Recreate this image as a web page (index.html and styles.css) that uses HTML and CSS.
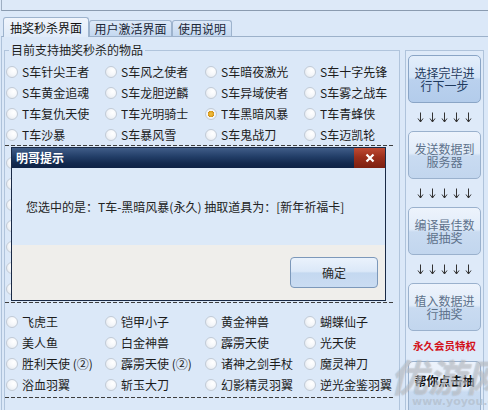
FILE: index.html
```html
<!DOCTYPE html>
<html lang="zh-CN">
<head>
<meta charset="utf-8">
<title>抽奖秒杀界面</title>
<link rel="stylesheet" href="styles.css">
</head>
<body>
<div class="app">
  <div class="topbar"></div>
  <div class="tabs">
    <div class="tab active t1">抽奖秒杀界面</div>
    <div class="tab t2">用户激活界面</div>
    <div class="tab t3">使用说明</div>
  </div>
  <div class="page">
    <fieldset class="group">
      <legend>目前支持抽奖秒杀的物品</legend>
      <div class="grid g1">
        <span class="radio"><i></i>S车针尖王者</span>
        <span class="radio"><i></i>S车风之使者</span>
        <span class="radio"><i></i>S车暗夜激光</span>
        <span class="radio"><i></i>S车十字先锋</span>
        <span class="radio"><i></i>S车黄金追魂</span>
        <span class="radio"><i></i>S车龙胆逆麟</span>
        <span class="radio"><i></i>S车异域使者</span>
        <span class="radio"><i></i>S车雾之战车</span>
        <span class="radio"><i></i>T车复仇天使</span>
        <span class="radio"><i></i>T车光明骑士</span>
        <span class="radio on"><i></i>T车黑暗风暴</span>
        <span class="radio"><i></i>T车青蜂侠</span>
        <span class="radio"><i></i>T车沙暴</span>
        <span class="radio"><i></i>S车暴风雪</span>
        <span class="radio"><i></i>S车鬼战刀</span>
        <span class="radio"><i></i>S车迈凯轮</span>
      </div>
      <div class="sep"></div>
      <div class="grid g2">
        <span class="radio"><i></i></span><span class="radio"><i></i></span><span class="radio"><i></i></span><span class="radio"><i></i></span>
        <span class="radio"><i></i></span><span class="radio"><i></i></span><span class="radio"><i></i></span><span class="radio"><i></i></span>
        <span class="radio"><i></i></span><span class="radio"><i></i></span><span class="radio"><i></i></span><span class="radio"><i></i></span>
        <span class="radio"><i></i></span><span class="radio"><i></i></span><span class="radio"><i></i></span><span class="radio"><i></i></span>
        <span class="radio"><i></i></span><span class="radio"><i></i></span><span class="radio"><i></i></span><span class="radio"><i></i></span>
        <span class="radio"><i></i></span><span class="radio"><i></i></span><span class="radio"><i></i></span><span class="radio"><i></i></span>
        <span class="radio"><i></i></span><span class="radio"><i></i></span><span class="radio"><i></i></span><span class="radio"><i></i></span>
      </div>
      <div class="sep"></div>
      <div class="grid g3">
        <span class="radio"><i></i>飞虎王</span>
        <span class="radio"><i></i>铠甲小子</span>
        <span class="radio"><i></i>黄金神兽</span>
        <span class="radio"><i></i>蝴蝶仙子</span>
        <span class="radio"><i></i>美人鱼</span>
        <span class="radio"><i></i>白金神兽</span>
        <span class="radio"><i></i>霹雳天使</span>
        <span class="radio"><i></i>光天使</span>
        <span class="radio"><i></i>胜利天使 (②)</span>
        <span class="radio"><i></i>霹雳天使 (②)</span>
        <span class="radio"><i></i>诸神之剑手杖</span>
        <span class="radio"><i></i>魔灵神刀</span>
        <span class="radio"><i></i>浴血羽翼</span>
        <span class="radio"><i></i>斩玉大刀</span>
        <span class="radio"><i></i>幻影精灵羽翼</span>
        <span class="radio"><i></i>逆光金鉴羽翼</span>
      </div>
      <div class="sep"></div>
    </fieldset>
    <div class="side">
      <div class="btn b1">选择完毕进<br>行下一步</div>
      <div class="arrows"><svg viewBox="0 0 7 11"><path d="M3.5 0.5V10M1 6.5L3.5 10L6 6.5"/></svg><svg viewBox="0 0 7 11"><path d="M3.5 0.5V10M1 6.5L3.5 10L6 6.5"/></svg><svg viewBox="0 0 7 11"><path d="M3.5 0.5V10M1 6.5L3.5 10L6 6.5"/></svg><svg viewBox="0 0 7 11"><path d="M3.5 0.5V10M1 6.5L3.5 10L6 6.5"/></svg><svg viewBox="0 0 7 11"><path d="M3.5 0.5V10M1 6.5L3.5 10L6 6.5"/></svg></div>
      <div class="btn">发送数据到<br>服务器</div>
      <div class="arrows"><svg viewBox="0 0 7 11"><path d="M3.5 0.5V10M1 6.5L3.5 10L6 6.5"/></svg><svg viewBox="0 0 7 11"><path d="M3.5 0.5V10M1 6.5L3.5 10L6 6.5"/></svg><svg viewBox="0 0 7 11"><path d="M3.5 0.5V10M1 6.5L3.5 10L6 6.5"/></svg><svg viewBox="0 0 7 11"><path d="M3.5 0.5V10M1 6.5L3.5 10L6 6.5"/></svg><svg viewBox="0 0 7 11"><path d="M3.5 0.5V10M1 6.5L3.5 10L6 6.5"/></svg></div>
      <div class="btn">编译最佳数<br>据抽奖</div>
      <div class="arrows"><svg viewBox="0 0 7 11"><path d="M3.5 0.5V10M1 6.5L3.5 10L6 6.5"/></svg><svg viewBox="0 0 7 11"><path d="M3.5 0.5V10M1 6.5L3.5 10L6 6.5"/></svg><svg viewBox="0 0 7 11"><path d="M3.5 0.5V10M1 6.5L3.5 10L6 6.5"/></svg><svg viewBox="0 0 7 11"><path d="M3.5 0.5V10M1 6.5L3.5 10L6 6.5"/></svg><svg viewBox="0 0 7 11"><path d="M3.5 0.5V10M1 6.5L3.5 10L6 6.5"/></svg></div>
      <div class="btn">植入数据进<br>行抽奖</div>
      <div class="vip">永久会员特权</div>
      <div class="btn b5">帮你点击抽</div>
    </div>
  </div>

  <div class="dialog">
    <div class="dlg-title">
      <span class="dlg-caption">明哥提示</span>
      <span class="dlg-close"><svg viewBox="0 0 10 10"><path d="M1.5 1.5L8.5 8.5M8.5 1.5L1.5 8.5"/></svg></span>
    </div>
    <div class="dlg-body">您选中的是：T车-黑暗风暴(永久) 抽取道具为：[新年祈福卡]</div>
    <div class="dlg-foot"><div class="ok">确定</div></div>
  </div>

  <div class="wm">
    <div class="wm-big">优游网</div>
    <div class="wm-url">www.yoyou.com</div>
  </div>
</div>
</body>
</html>
```

FILE: styles.css
```css
* { box-sizing: border-box; }
html, body { margin: 0; padding: 0; }
body {
  width: 488px;
  height: 410px;
  overflow: hidden;
  background: #dbe8f8;
  font-family: "Noto Sans CJK SC", "Noto Sans", sans-serif;
  font-size: 12px;
  color: #1e1e1e;
}
.app { position: relative; width: 488px; height: 410px; overflow: hidden; }

.topbar {
  height: 11px;
  margin-left: 1px;
  border-left: 1px solid #9eaec2;
  border-bottom: 1px solid #8a9bb0;
  background: #dde9f8;
}

.tabs {
  display: flex;
  align-items: flex-end;
  height: 25px;
  padding-left: 3px;
}
.tab {
  height: 16px;
  border: 1px solid #9db3cd;
  border-bottom: none;
  border-radius: 3px 3px 0 0;
  background: linear-gradient(#dde9f8, #c4d8f0);
  text-align: center;
  line-height: 15px;
  color: #1c2838;
  white-space: nowrap;
}
.tab.active {
  position: relative;
  z-index: 1;
  height: 20px;
  margin-bottom: -1px;
  line-height: 19px;
  background: linear-gradient(#f0f5fc, #e0ebf9);
  color: #111;
}
.t1 { width: 86px; }
.t2 { width: 83px; }
.t3 { width: 60px; }

.page {
  display: flex;
  align-items: flex-start;
  height: 374px;
  margin-left: 1px;
  border-left: 1px solid #aec2da;
  border-top: 1px solid #9cb1ca;
}

.group {
  margin: 6px 0 0 2px;
  width: 396px;
  min-width: 0;
  padding: 4px 0 40px 0;
  border: 1px solid #b0c4dc;
}
.group legend {
  margin-left: 4px;
  padding: 0 2px;
  line-height: 14px;
  font-size: 12px;
  color: #1e1e1e;
}

.grid {
  display: grid;
  grid-template-columns: 99px 100px 99px 1fr;
  grid-auto-rows: 21px;
  padding-left: 1px;
}
.g2 { margin-top: 6px; margin-bottom: 3px; }
.g3 { margin-top: 8px; margin-bottom: 2px; }

.radio {
  display: flex;
  align-items: center;
  white-space: nowrap;
  line-height: 21px;
  color: #1c1c1c;
}
.radio i {
  flex: none;
  width: 12px;
  height: 12px;
  margin-right: 4px;
  border-radius: 50%;
  border: 1px solid #c2cbd6;
  background: radial-gradient(circle at 65% 35%, #ffffff 0%, #f5f7fa 45%, #dfe4eb 100%);
}
.radio.on i {
  background:
    radial-gradient(circle at 50% 50%, #f2c14a 0%, #dea21e 36%, #c9891a 42%, #f4f6f9 50%, #e3e7ec 100%);
}

.sep {
  height: 1px;
  margin-right: 6px;
  background: repeating-linear-gradient(90deg, #3e3e3e 0 4px, transparent 4px 6px);
}

.side {
  margin: 13px 0 0 5px;
  width: 79px;
  height: 400px;
  flex: none;
  border: 1px solid #afc3db;
  padding: 4px 2px 0;
  background: #deeaf9;
}
.btn {
  height: 48px;
  border: 1px solid #9ab1cd;
  border-radius: 5px;
  background: linear-gradient(#edf3fc 0%, #e1ecf9 46%, #c9dbf1 52%, #c2d6ee 100%);
  display: flex;
  align-items: center;
  justify-content: center;
  text-align: center;
  line-height: 13px;
  color: #5e728b;
  white-space: nowrap;
}
.btn.b1 {
  border-color: #8aa5c6;
  background: linear-gradient(#e3eefb 0%, #d5e5f8 46%, #bad1ee 52%, #b3cceb 100%);
  color: #1f3a5e;
}
.btn.b5 {
  height: 60px;
  align-items: flex-start;
  padding-top: 12px;
  font-weight: bold;
  font-size: 12px;
  color: #111;
}
.arrows {
  height: 28px;
  display: flex;
  justify-content: center;
  align-items: center;
  gap: 5px;
}
.arrows svg {
  width: 7px;
  height: 11px;
  fill: none;
  stroke: #333;
  stroke-width: 1;
}
.vip {
  height: 30px;
  line-height: 30px;
  text-align: center;
  color: #d3121b;
  font-weight: bold;
  font-size: 10.5px;
}

.dialog {
  position: absolute;
  left: 11px;
  top: 147px;
  width: 375px;
  height: 154px;
  border: 1px solid #1a2a46;
  display: flex;
  flex-direction: column;
  background: #dce9f8;
  z-index: 5;
}
.dlg-title {
  height: 20px;
  flex: none;
  display: flex;
  justify-content: space-between;
  align-items: center;
  background: linear-gradient(#405d88 0%, #24406a 40%, #132a4f 75%, #0e2245 100%);
}
.dlg-caption {
  padding-left: 4px;
  color: #fff;
  font-weight: bold;
  font-size: 12px;
  line-height: 20px;
}
.dlg-close {
  width: 31px;
  height: 20px;
  display: flex;
  align-items: center;
  justify-content: center;
  background: linear-gradient(#bf4a33 0%, #9c2f1b 45%, #7c1f10 100%);
}
.dlg-close svg {
  width: 10px;
  height: 10px;
  stroke: #fff;
  stroke-width: 2.2;
  fill: none;
}
.dlg-body {
  height: 77px;
  flex: none;
  display: flex;
  align-items: center;
  padding-left: 14px;
  background: #dce9f8;
  color: #222;
  white-space: nowrap;
}
.dlg-foot {
  flex: 1;
  display: flex;
  justify-content: flex-end;
  align-items: center;
  padding-right: 7px;
  background: #efeeeb;
}
.ok {
  width: 88px;
  height: 31px;
  border: 1px solid #7c98ba;
  border-radius: 4px;
  background: linear-gradient(#eaf2fc 0%, #dbe8f8 46%, #c4d8f0 52%, #cadcf2 100%);
  display: flex;
  align-items: center;
  justify-content: center;
  color: #2a2a2a;
}

.wm {
  position: absolute;
  left: 390px;
  top: 356px;
  z-index: 6;
  pointer-events: none;
}
.wm-big {
  font-size: 38px;
  line-height: 40px;
  font-style: italic;
  font-weight: bold;
  color: rgba(255, 255, 255, 0.4);
  text-shadow: 0 0 1px rgba(90, 100, 115, 0.5);
  white-space: nowrap;
}
.wm-url {
  margin-left: 22px;
  font-family: "DejaVu Sans", sans-serif;
  font-size: 11px;
  line-height: 12px;
  font-weight: bold;
  color: rgba(180, 192, 206, 0.8);
  white-space: nowrap;
}
```
